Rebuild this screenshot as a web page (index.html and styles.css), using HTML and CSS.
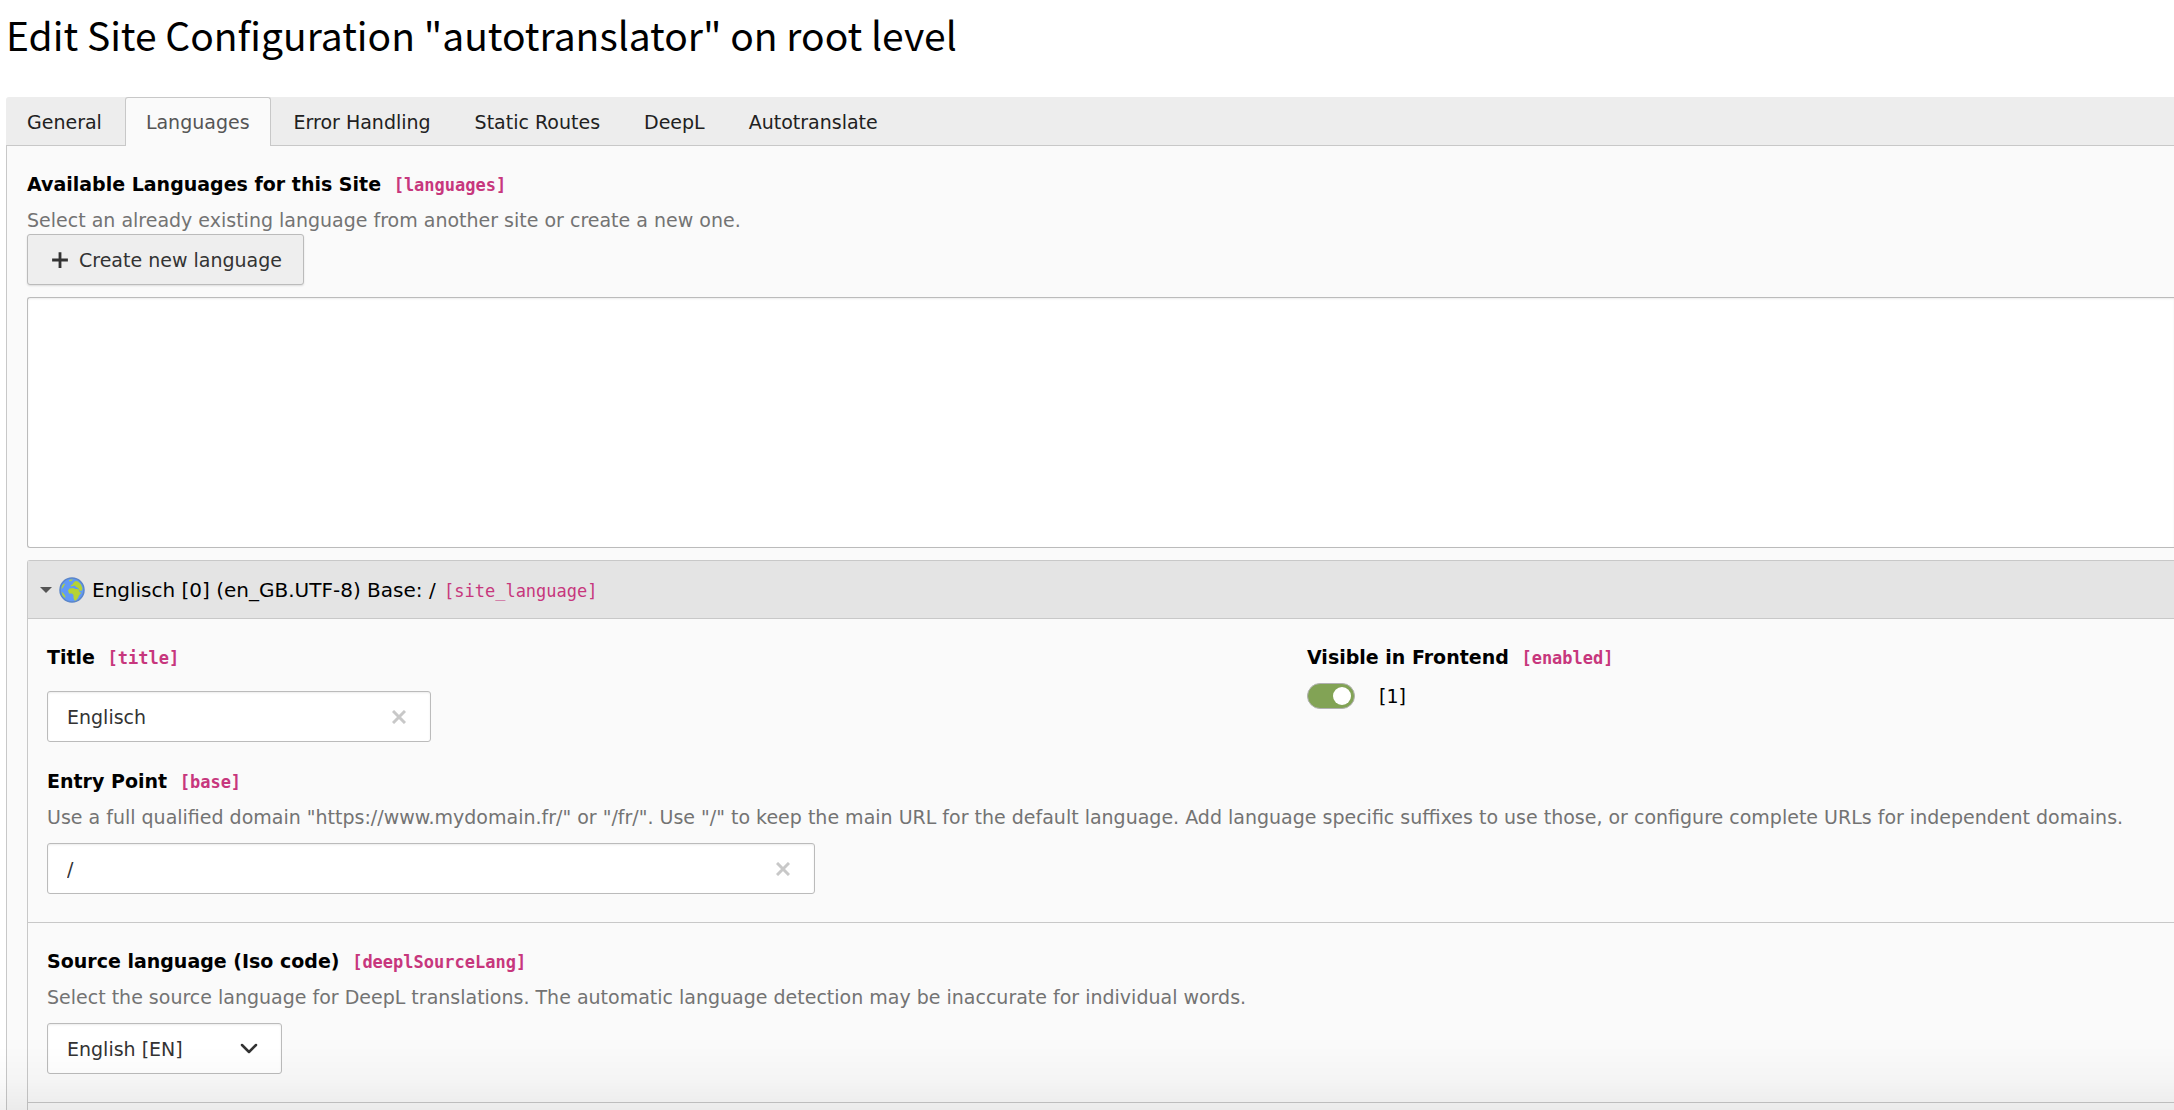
FILE: index.html
```html
<!DOCTYPE html>
<html lang="en">
<head>
<meta charset="utf-8">
<meta name="viewport" content="width=device-width, initial-scale=1">
<title>Edit Site Configuration</title>
<link rel="stylesheet" href="styles.css">
</head>
<body>
<main class="module">
  <h1 class="module-title">Edit Site Configuration "autotranslator" on root level</h1>

  <div class="tabs" role="tablist">
    <button class="tab" type="button" role="tab">General</button>
    <button class="tab tab-active" type="button" role="tab" aria-selected="true">Languages</button>
    <button class="tab" type="button" role="tab">Error Handling</button>
    <button class="tab" type="button" role="tab">Static Routes</button>
    <button class="tab" type="button" role="tab">DeepL</button>
    <button class="tab" type="button" role="tab">Autotranslate</button>
  </div>

  <section class="tab-content" role="tabpanel">
    <label class="label" for="languages">Available Languages for this Site <code class="code">[languages]</code></label>
    <p class="help">Select an already existing language from another site or create a new one.</p>
    <button class="btn" type="button">
      <svg class="icon-plus" viewBox="0 0 16 16" aria-hidden="true"><path d="M8 1v14M1 8h14"/></svg>
      Create new language
    </button>
    <select class="language-list" id="languages" multiple></select>

    <article class="panel">
      <button class="panel-heading" type="button" aria-expanded="true">
        <svg class="icon-caret" viewBox="0 0 12 6" aria-hidden="true"><path d="M0 0h12L6 6z"/></svg>
        <svg class="icon-globe" viewBox="0 0 26 26" aria-hidden="true">
          <circle cx="13" cy="13" r="12" fill="#6199f5" stroke="#5b86c9" stroke-width="1.500"/>
          <path fill="#b5d334" d="M9 13.500 10.500 11.500 14 11 16.500 12 19 12 21 15.500 22.500 15.500 20 18.500 19 21 17 23.500 15.500 23.500 14.500 21 14.500 18 13 16.500 10 16.500z"/>
          <path fill="#b5d334" d="M11.500 9.500 12 8 13.500 7.500 14.500 5.500 16.500 4 19 4.500 22 7.500 23.500 11.500 22.500 14 20.500 13.500 19 11 17 10 16 8.500 14 9z"/>
          <path fill="#b5d334" d="M10 3.500 11.500 2.500 14 2.500 12.500 4 10.500 4.500zM3 9 5 6.500 6 7 4 10.500 2.500 12zM2.500 14.500 5 17 6.500 19.500 6 21 3.500 18.500z"/>
        </svg>
        <span>Englisch [0] (en_GB.UTF-8) Base: / <code class="code">[site_language]</code></span>
      </button>

      <div class="panel-section">
        <div class="columns">
          <div class="field">
            <label class="label" for="title">Title <code class="code">[title]</code></label>
            <div class="input-box input-box-small">
              <input class="input" id="title" type="text" value="Englisch">
              <button class="clear" type="button" aria-label="Clear title">
                <svg viewBox="0 0 14 14" aria-hidden="true"><path d="M1 1l12 12M13 1L1 13"/></svg>
              </button>
            </div>
          </div>
          <div class="field">
            <label class="label" for="enabled">Visible in Frontend <code class="code">[enabled]</code></label>
            <label class="switch"><input class="switch-input" id="enabled" type="checkbox" checked> [1]</label>
          </div>
        </div>
        <div class="field">
          <label class="label" for="base">Entry Point <code class="code">[base]</code></label>
          <p class="help">Use a full qualified domain "https://www.mydomain.fr/" or "/fr/". Use "/" to keep the main URL for the default language. Add language specific suffixes to use those, or configure complete URLs for independent domains.</p>
          <div class="input-box input-box-wide">
            <input class="input" id="base" type="text" value="/">
            <button class="clear" type="button" aria-label="Clear entry point">
              <svg viewBox="0 0 14 14" aria-hidden="true"><path d="M1 1l12 12M13 1L1 13"/></svg>
            </button>
          </div>
        </div>
      </div>

      <div class="panel-section">
        <div class="field">
          <label class="label" for="source">Source language (Iso code) <code class="code">[deeplSourceLang]</code></label>
          <p class="help">Select the source language for DeepL translations. The automatic language detection may be inaccurate for individual words.</p>
          <div class="select-box">
            <select class="select" id="source"><option>English [EN]</option></select>
            <svg class="icon-chevron" viewBox="0 0 18 11" aria-hidden="true"><path d="M2 2l7 7 7-7"/></svg>
          </div>
        </div>
      </div>
      <div class="panel-end"></div>
    </article>
  </section>
</main>
<div class="bottom-shade"></div>
</body>
</html>
```
FILE: styles.css
```css
* { box-sizing: border-box; }

body {
  margin: 0;
  background: #fff;
  color: #000;
  font: 19px/28px Verdana, "DejaVu Sans", sans-serif;
}

button, input, select { font: inherit; color: inherit; margin: 0; }

.module {
  display: flex;
  flex-direction: column;
  min-height: 100vh;
  padding: 6px 0 0 6px;
  overflow: hidden;
}

.module-title {
  margin: 0 0 35px;
  font: 400 39px/56px "Source Sans Pro", "Noto Sans CJK SC", sans-serif;
}

.tabs {
  display: flex;
  flex: none;
  gap: 2px;
  height: 49px;
  background: #ededed;
  border-bottom: 1px solid #c8c8c8;
  border-top-left-radius: 3px;
}

.tab {
  height: 49px;
  padding: 0 20px;
  border: 1px solid transparent;
  border-bottom: 0;
  border-radius: 3px 3px 0 0;
  background: none;
  color: #212121;
}

.tab-active {
  background: #fafafa;
  border-color: #c8c8c8;
  color: #555;
}

.tab-content {
  display: flex;
  flex: 1;
  flex-direction: column;
  padding: 24px 0 0 20px;
  background: #fafafa;
  border-left: 1px solid #c8c8c8;
}

.label { display: block; font-weight: 700; }

.code {
  margin-left: 6px;
  color: #c7377d;
  font-family: Menlo, "DejaVu Sans Mono", monospace;
  font-size: 17px;
  line-height: 1;
}

.help {
  margin: 8px 0 0;
  color: #737373;
  white-space: nowrap;
}

.btn {
  display: flex;
  align-items: center;
  align-self: flex-start;
  gap: 10px;
  height: 51px;
  padding: 0 21px 0 23px;
  border: 1px solid #bbb;
  border-radius: 3px;
  background: #eee;
  box-shadow: 0 1px 2px rgba(0, 0, 0, .12);
  color: #333;
}

.icon-plus { width: 18px; height: 18px; fill: none; stroke: #333; stroke-width: 2.5; }

.language-list {
  display: block;
  width: 100%;
  height: 251px;
  margin: 12px 0;
  border: 1px solid #bbb;
  border-right: 0;
  border-radius: 3px 0 0 3px;
  background: #fff;
  box-shadow: inset 0 1px 2px rgba(0, 0, 0, .08);
}

.panel {
  display: flex;
  flex: 1;
  flex-direction: column;
  border: 1px solid #c8c8c8;
  border-width: 1px 0 0 1px;
  border-top-left-radius: 3px;
}

.panel-heading {
  display: flex;
  align-items: center;
  width: 100%;
  height: 57px;
  padding: 0 12px;
  border: 0;
  background: #e4e4e4;
  font-size: 20px;
  text-align: left;
}

.panel-heading .code { margin-left: 2px; }

.icon-caret { width: 12px; height: 6px; margin-right: 7px; fill: #555; }

.icon-globe { width: 26px; height: 26px; margin-right: 7px; }

.panel-section {
  padding: 24px 0 28px 19px;
  border-top: 1px solid #c8c8c8;
}

.panel-end { flex: 1; min-height: 6px; border-top: 1px solid #c8c8c8; }

.columns {
  display: grid;
  grid-template-columns: 1260fr 867fr;
  margin-bottom: 25px;
}

.input-box {
  display: flex;
  align-items: center;
  height: 51px;
  margin-top: 12px;
  padding: 0 20px 0 19px;
  border: 1px solid #bbb;
  border-radius: 3px;
  background: #fff;
  box-shadow: inset 0 1px 2px rgba(0, 0, 0, .08);
  color: #333;
}

.input-box-small { width: 384px; margin-top: 20px; }

.input-box-wide { width: 768px; }

.input {
  flex: 1;
  min-width: 0;
  padding: 0;
  border: 0;
  outline: 0;
  background: none;
}

.clear {
  display: flex;
  padding: 4px;
  border: 0;
  background: none;
}

.clear svg { width: 14px; height: 14px; fill: none; stroke: #c8c8c8; stroke-width: 3; }

.switch { display: flex; align-items: center; gap: 24px; margin-top: 11px; }

.switch-input {
  display: flex;
  align-items: center;
  justify-content: flex-end;
  width: 48px;
  height: 26px;
  padding: 0 3px;
  appearance: none;
  border: 1px solid #b0b0b0;
  border-radius: 13px;
  background: #82a355;
}

.switch-input::before {
  content: "";
  width: 18px;
  height: 18px;
  border-radius: 50%;
  background: #fff;
}

.select-box { display: grid; width: 235px; margin-top: 12px; }

.select {
  grid-area: 1 / 1;
  height: 51px;
  padding: 0 19px;
  appearance: none;
  border: 1px solid #bbb;
  border-radius: 3px;
  background: #fff;
  box-shadow: inset 0 1px 2px rgba(0, 0, 0, .08);
  color: #333;
}

.icon-chevron {
  grid-area: 1 / 1;
  place-self: center end;
  width: 18px;
  height: 11px;
  margin-right: 24px;
  fill: none;
  stroke: #333;
  stroke-width: 2.5;
  stroke-linecap: round;
  stroke-linejoin: round;
  pointer-events: none;
}

/* Soft shade over the lower edge of the scrolled area */
.bottom-shade {
  position: fixed;
  inset: auto 0 0 0;
  height: 64px;
  background: linear-gradient(rgba(0, 0, 0, 0), rgba(0, 0, 0, .02) 50%, rgba(0, 0, 0, .06));
  pointer-events: none;
}
```
